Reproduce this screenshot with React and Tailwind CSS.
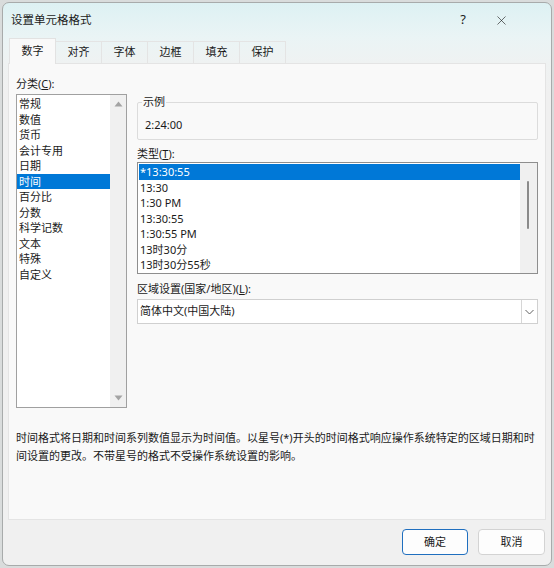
import { X } from 'lucide-react';

const categories = ['常规', '数值', '货币', '会计专用', '日期', '时间', '百分比', '分数', '科学记数', '文本', '特殊', '自定义'];
const types = ['*13:30:55', '13:30', '1:30 PM', '13:30:55', '1:30:55 PM', '13时30分', '13时30分55秒'];
const tabs = ['数字', '对齐', '字体', '边框', '填充', '保护'];

function Arrow({ up }) {
  return (
    <svg width="9" height="6" viewBox="0 0 9 6">
      <path d={up ? 'M0.5 5.5 L4.5 0.5 L8.5 5.5 Z' : 'M0.5 0.5 L4.5 5.5 L8.5 0.5 Z'} fill="#a3a3a3" />
    </svg>
  );
}

function App() {
  return (
    <div
      className="w-[554px] h-[568px] bg-[#d9dcdc] pt-[2px] pl-[2px] pr-[2px] pb-[2px] text-[11px] text-[#1a1a1a]"
      style={{ fontFamily: '"Noto Sans", "Noto Sans CJK SC", sans-serif' }}
    >
      <div className="h-full flex flex-col rounded-[7px] border border-[#a8abab] overflow-hidden bg-[linear-gradient(to_bottom,#ddf1f3_0px,#eaf4f5_34px,#eff2f2_60px,#f0f0f0_90px)]">
        {/* title bar */}
        <div className="h-[34px] flex items-center pl-[8px] pr-[30px] shrink-0">
          <span className="text-[11.5px]">设置单元格格式</span>
          <div className="ml-auto flex items-center">
            <span className="w-[20px] text-center text-[13px]">?</span>
            <span className="w-[40px] ml-[8px] flex justify-center">
              <X size={15} strokeWidth={1} />
            </span>
          </div>
        </div>

        {/* tab strip */}
        <div className="h-[26px] flex items-end pl-[6px] shrink-0">
          {tabs.map((t, i) => (
            <div
              key={t}
              className={
                i === 0
                  ? 'w-[47px] h-[26px] bg-[#f9f9f9] border border-b-0 border-[#e2e2e2] flex items-center justify-center relative z-10 -mb-px'
                  : 'w-[46px] h-[22px] border border-l-0 border-b-0 border-[#e4e4e4] flex items-center justify-center'
              }
            >
              {t}
            </div>
          ))}
        </div>

        {/* panel */}
        <div className="mx-[5px] h-[457px] bg-[#f9f9f9] border border-[#e4e4e4] flex flex-col shrink-0">
          <div className="flex pl-[7px] pt-[10px]">
            {/* category column */}
            <div className="w-[111px] flex flex-col">
              <div className="h-[20px] leading-[20px]">
                分类(<span className="underline">C</span>):
              </div>
              <div className="h-[314px] border border-[#a0a0a0] bg-white flex">
                <div className="flex-1 pt-[1px]">
                  {categories.map(c => (
                    <div
                      key={c}
                      className={
                        c === '时间'
                          ? 'h-[15.5px] leading-[15.5px] pl-[2px] bg-[#0078d7] text-white'
                          : 'h-[15.5px] leading-[15.5px] pl-[2px]'
                      }
                    >
                      {c}
                    </div>
                  ))}
                </div>
                <div className="w-[16px] bg-[#f0f0f0] flex flex-col items-center justify-between py-[6px]">
                  <Arrow up />
                  <Arrow />
                </div>
              </div>
            </div>

            {/* format column */}
            <div className="w-[401px] ml-[10px] flex flex-col">
              <fieldset className="h-[44px] mt-[22px] border border-[#dcdcdc] rounded-[2px] px-[7px]">
                <legend className="px-[1px] ml-[-3px] leading-[12px]">示例</legend>
                <div className="pt-[10px] pl-[0px] leading-[14px]">2:24:00</div>
              </fieldset>

              <div className="mt-[6px] h-[16px] leading-[16px]">
                类型(<span className="underline">T</span>):
              </div>
              <div className="h-[112px] border border-[#8e8e8e] bg-white flex">
                <div className="flex-1 pt-[1px] pl-[1px]">
                  {types.map((t, i) => (
                    <div
                      key={i}
                      className={
                        i === 0
                          ? 'h-[15.5px] leading-[15.5px] pl-[1px] bg-[#0078d7] text-white'
                          : 'h-[15.5px] leading-[15.5px] pl-[1px]'
                      }
                    >
                      {t}
                    </div>
                  ))}
                </div>
                <div className="w-[17px] bg-[#f0f0f0] flex justify-center pt-[18px] pr-[1px]">
                  <div className="w-[2px] h-[48px] rounded-full bg-[#8a8a8a]" />
                </div>
              </div>

              <div className="mt-[5px] h-[20px] leading-[20px]">
                区域设置(国家/地区)(<span className="underline">L</span>):
              </div>
              <div className="h-[25px] border border-[#d0d0d0] bg-white flex items-center">
                <span className="flex-1 pl-[2px]">简体中文(中国大陆)</span>
                <div className="w-[16px] h-full border-l border-[#d6d6d6] flex items-center justify-center">
                  <svg width="9" height="6" viewBox="0 0 9 6">
                    <path d="M0.5 1 L4.5 5 L8.5 1" fill="none" stroke="#606060" strokeWidth="1" />
                  </svg>
                </div>
              </div>
            </div>
          </div>

          <p className="mt-[21px] pl-[7px] pr-[10px] leading-[18px]">
            时间格式将日期和时间系列数值显示为时间值。以星号(*)开头的时间格式响应操作系统特定的区域日期和时间设置的更改。不带星号的格式不受操作系统设置的影响。
          </p>
        </div>

        {/* buttons */}
        <div className="flex-1 flex items-center justify-end gap-[10px] pr-[6px] pb-[1px]">
          <button className="w-[66px] h-[26px] rounded-[4px] border border-[#1f6fbf] bg-[#fdfdfd]">确定</button>
          <button className="w-[67px] h-[26px] rounded-[4px] border border-[#d3d3d3] bg-[#fdfdfd]">取消</button>
        </div>
      </div>
    </div>
  );
}

export default App;
